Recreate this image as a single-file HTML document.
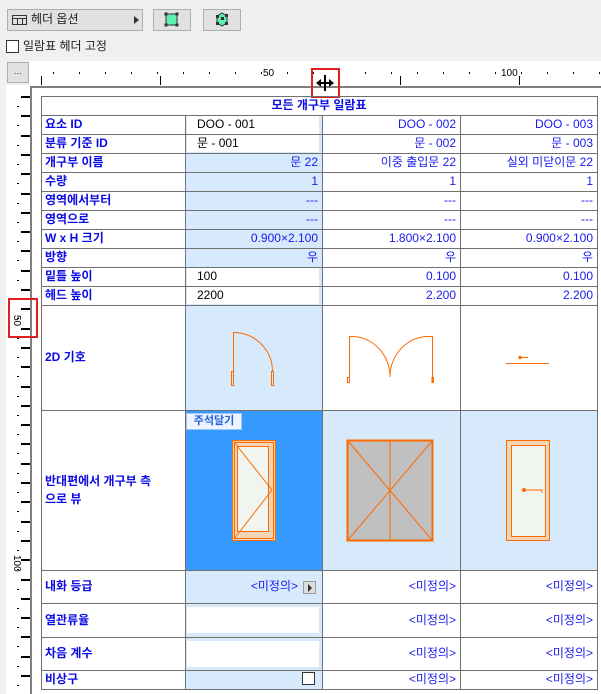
<!DOCTYPE html>
<html><head><meta charset="utf-8"><style>
*{box-sizing:border-box;margin:0;padding:0}
body{width:601px;height:694px;background:#f0f0f0;position:relative;overflow:hidden;font-family:"Liberation Sans","Noto Sans CJK KR",sans-serif;font-size:12px}
.a{position:absolute}
.btn{position:absolute;background:#e1e1e1;border:1px solid #adadad}
.h{position:absolute;height:1px;background:#707070}
.v{position:absolute;width:1px;background:#707070}
.lb{position:absolute;left:45px;color:#0a0ae6;font-weight:bold;font-size:12px;line-height:19px;white-space:nowrap}
.t{position:absolute;color:#1a1aee;font-size:12px;line-height:19px;text-align:right;white-space:nowrap}
.k{position:absolute;color:#000;font-size:12px;line-height:19px;white-space:nowrap}
.blue{position:absolute;background:#d6eafc}
.wh{position:absolute;background:#fff}
.tk{position:absolute;background:#000}
</style></head><body>
<div class="btn" style="left:7px;top:9px;width:136px;height:22px"></div>
<svg class="a" style="left:12px;top:13px" width="16" height="14"><rect x="0.5" y="2.5" width="14" height="9" fill="none" stroke="#333"/><line x1="0" y1="5.5" x2="15" y2="5.5" stroke="#333"/><line x1="5.5" y1="5" x2="5.5" y2="12" stroke="#333"/><line x1="10.5" y1="5" x2="10.5" y2="12" stroke="#333"/></svg>
<div class="k" style="left:31px;top:10px;color:#222">헤더 옵션</div>
<svg class="a" style="left:134px;top:16px" width="6" height="8"><path d="M0 0L5 4L0 8Z" fill="#333"/></svg>
<div class="btn" style="left:153px;top:9px;width:38px;height:22px"></div>
<svg class="a" style="left:164px;top:12px" width="16" height="16"><rect x="2" y="2" width="11" height="11" fill="#5ef0b0" stroke="#333"/><rect x="0.5" y="0.5" width="3" height="3" fill="#333"/><rect x="11.5" y="0.5" width="3" height="3" fill="#333"/><rect x="0.5" y="11.5" width="3" height="3" fill="#333"/><rect x="11.5" y="11.5" width="3" height="3" fill="#333"/></svg>
<div class="btn" style="left:203px;top:9px;width:38px;height:22px"></div>
<svg class="a" style="left:214px;top:12px" width="16" height="16"><path d="M3 4L8 1L13 4L13 11L8 14L3 11Z" fill="#5ef0b0" stroke="#333"/><rect x="2" y="3" width="3" height="3" fill="#333"/><rect x="11" y="2" width="3" height="3" fill="#333"/><rect x="2" y="10" width="3" height="3" fill="#333"/><rect x="11" y="10" width="3" height="3" fill="#333"/><rect x="7" y="5" width="3" height="3" fill="#333"/></svg>
<div class="a" style="left:6px;top:40px;width:13px;height:13px;border:1px solid #333;background:#fff"></div>
<div class="k" style="left:23px;top:37px;color:#222">일람표 헤더 고정</div>
<div class="btn" style="left:7px;top:62px;width:22px;height:21px"></div>
<div class="k" style="left:14px;top:62px;font-size:9px;color:#333">...</div>
<div class="a" style="left:29px;top:61px;width:572px;height:25px;background:#fff"></div>
<div class="a" style="left:6px;top:85px;width:25px;height:609px;background:#fff"></div>
<div class="a" style="left:31px;top:85px;width:570px;height:609px;background:#fff"></div>
<div class="a" style="left:30px;top:86px;width:571px;height:2px;background:#808080"></div>
<div class="a" style="left:30px;top:86px;width:2px;height:608px;background:#808080"></div>
<div class="k" style="left:263px;top:64px;font-size:10px;background:#fff">50</div>
<div class="k" style="left:501px;top:64px;font-size:10px;background:#fff">100</div>
<div class="tk" style="left:41px;top:76px;width:1px;height:9px"></div>
<div class="tk" style="left:160px;top:76px;width:1px;height:9px"></div>
<div class="tk" style="left:400px;top:76px;width:1px;height:9px"></div>
<div class="tk" style="left:519px;top:76px;width:1px;height:9px"></div>
<div id="tt"></div>
<div class="a" style="left:311px;top:68px;width:29px;height:30px;border:2px solid #e02020"></div>
<svg class="a" style="left:314px;top:74px" width="22" height="18"><line x1="11" y1="1" x2="11" y2="17" stroke="#000" stroke-width="2"/><path d="M2 9L7 5V13Z M20 9L15 5V13Z" fill="#000"/><line x1="3" y1="9" x2="19" y2="9" stroke="#000" stroke-width="2"/></svg>
<div class="k" style="top:315px;font-size:10px;transform:rotate(90deg);transform-origin:left top;left:26px">50</div>
<div class="a" style="left:8px;top:298px;width:30px;height:40px;border:2px solid #e02020"></div>
<div class="k" style="left:26px;top:555px;font-size:10px;transform:rotate(90deg);transform-origin:left top">100</div>
<div class="blue" style="left:185px;top:115px;width:137px;height:190px"></div>
<div class="wh" style="left:187px;top:116px;width:132px;height:36px"></div>
<div class="wh" style="left:187px;top:268px;width:132px;height:36px"></div>
<div class="blue" style="left:185px;top:305px;width:137px;height:105px"></div>
<div class="a" style="left:185px;top:410px;width:137px;height:160px;background:#3599fd"></div>
<div class="blue" style="left:322px;top:410px;width:275px;height:160px"></div>
<div class="blue" style="left:185px;top:570px;width:137px;height:120px"></div>
<div class="wh" style="left:187px;top:607px;width:132px;height:26px"></div>
<div class="wh" style="left:187px;top:641px;width:132px;height:26px"></div>
<div class="h" style="left:41px;top:96px;width:557px"></div>
<div id="g"></div>
<div class="v" style="left:41px;top:96px;height:594px"></div>
<div class="v" style="left:597px;top:96px;height:594px"></div>
<div class="v" style="left:185px;top:115px;height:575px"></div>
<div class="v" style="left:322px;top:115px;height:575px"></div>
<div class="v" style="left:460px;top:115px;height:575px"></div>
<div class="a" style="left:41px;top:96px;width:556px;text-align:center;color:#0a0ae6;font-weight:bold;line-height:19px">모든 개구부 일람표</div>
<div class="lb" style="top:115px">요소 ID</div>
<div class="lb" style="top:134px">분류 기준 ID</div>
<div class="lb" style="top:153px">개구부 이름</div>
<div class="lb" style="top:172px">수량</div>
<div class="lb" style="top:191px">영역에서부터</div>
<div class="lb" style="top:210px">영역으로</div>
<div class="lb" style="top:229px">W x H 크기</div>
<div class="lb" style="top:248px">방향</div>
<div class="lb" style="top:267px">밑틀 높이</div>
<div class="lb" style="top:286px">헤드 높이</div>
<div class="lb" style="top:348px">2D 기호</div>
<div class="lb" style="top:472px;line-height:18px">반대편에서 개구부 측<br>으로 뷰</div>
<div class="lb" style="top:577px">내화 등급</div>
<div class="lb" style="top:611px">열관류율</div>
<div class="lb" style="top:644px">차음 계수</div>
<div class="lb" style="top:670px">비상구</div>
<div id="vals"></div>
<svg class="a" style="left:185px;top:305px" width="412" height="105" fill="none" stroke="#ff6a00" stroke-width="1">
<path d="M48.5 27V80 M48.5 27.5A39 39 0 0 1 87.5 66"/><rect x="46.5" y="66.5" width="2" height="14"/><rect x="86.5" y="66.5" width="2" height="14"/>
<path d="M164.5 31V78 M164.5 31.5H167A38 41 0 0 1 205 72 M247.5 31V78 M247.5 31.5H243A38 41 0 0 0 205 72"/><rect x="162.5" y="72.5" width="2" height="5"/><rect x="247" y="72.5" width="1.5" height="5"/>
<path d="M321 58.5H364 M334 52.5H343"/><circle cx="335" cy="52.5" r="1.2" fill="#ff6a00"/>
</svg>
<div class="a" style="left:186px;top:413px;width:56px;height:17px;background:#eef4ff;border:1px solid #9cc4f8;color:#2060e0;font-size:11px;line-height:15px;text-align:center;font-weight:bold">주석달기</div>
<svg class="a" style="left:185px;top:410px" width="412" height="160" stroke="#ff6a00" stroke-width="1">
<rect x="47.5" y="30.5" width="43" height="100" fill="#f0d6b6"/>
<rect x="52.5" y="36.5" width="31" height="85" fill="#f0f6ef"/>
<path d="M49 32L87 80L49 129" fill="none"/>
<rect x="49.5" y="32.5" width="39" height="96" fill="none"/>
<rect x="162.5" y="30.5" width="85" height="100" fill="#c0c0c0" stroke-width="2"/>
<path d="M163 31L247 130M247 31L163 130M205 31V130" fill="none"/>
<rect x="321.5" y="30.5" width="43" height="100" fill="#f0d6b6"/>
<rect x="326.5" y="35.5" width="34" height="91" fill="#f0f6ef"/>
<path d="M339 80H357V83" fill="none"/><circle cx="339" cy="80" r="1.5" fill="#ff6a00"/>
</svg>
<div class="a" style="left:303px;top:581px;width:13px;height:13px;background:#ddd;border:1px solid #999"></div>
<svg class="a" style="left:307px;top:584px" width="6" height="8"><path d="M1 0L5 4L1 8Z" fill="#333"/></svg>
<div class="a" style="left:302px;top:672px;width:13px;height:13px;background:#fff;border:1px solid #333"></div>
<script>
var g='',r=[115,134,153,172,191,210,229,248,267,286,305,410,570,603,637,670,689];
r.forEach(function(y){g+='<div class="h" style="left:41px;top:'+y+'px;width:557px"></div>'});
document.getElementById('g').innerHTML=g;
var tt='';for(var x=53;x<600;x+=26){tt+='<div class="tk" style="left:'+x+'px;top:72px;width:1px;height:2px"></div>'}
for(var y=96;y<694;y+=19.3){tt+='<div class="tk" style="left:21px;top:'+Math.round(y)+'px;width:9px;height:2px"></div><div class="tk" style="left:17px;top:'+Math.round(y+10)+'px;width:2px;height:1px"></div>'}
document.getElementById('tt').innerHTML=tt;
function t(x,y,s,c){return '<div class="'+(c||'t')+'" style="right:'+(601-x)+'px;top:'+y+'px">'+s+'</div>'}
var v='';
var rows=[[115,'','DOO - 002','DOO - 003'],[134,'','문 - 002','문 - 003'],[153,'문 22','이중 출입문 22','실외 미닫이문 22'],[172,'1','1','1'],[191,'---','---','---'],[210,'---','---','---'],[229,'0.900×2.100','1.800×2.100','0.900×2.100'],[248,'우','우','우'],[267,'','0.100','0.100'],[286,'','2.200','2.200']];
rows.forEach(function(a){v+=t(318,a[0],a[1])+t(456,a[0],a[2])+t(593,a[0],a[3])});
[[577,1],[611,0],[644,0],[670,0]].forEach(function(a){if(a[1])v+=t(298,a[0],'&lt;미정의&gt;');v+=t(456,a[0],'&lt;미정의&gt;')+t(593,a[0],'&lt;미정의&gt;')});
v+='<div class="k" style="left:197px;top:115px">DOO - 001</div><div class="k" style="left:197px;top:134px">문 - 001</div><div class="k" style="left:197px;top:267px">100</div><div class="k" style="left:197px;top:286px">2200</div>';
document.getElementById('vals').innerHTML=v;
</script>
</body></html>
